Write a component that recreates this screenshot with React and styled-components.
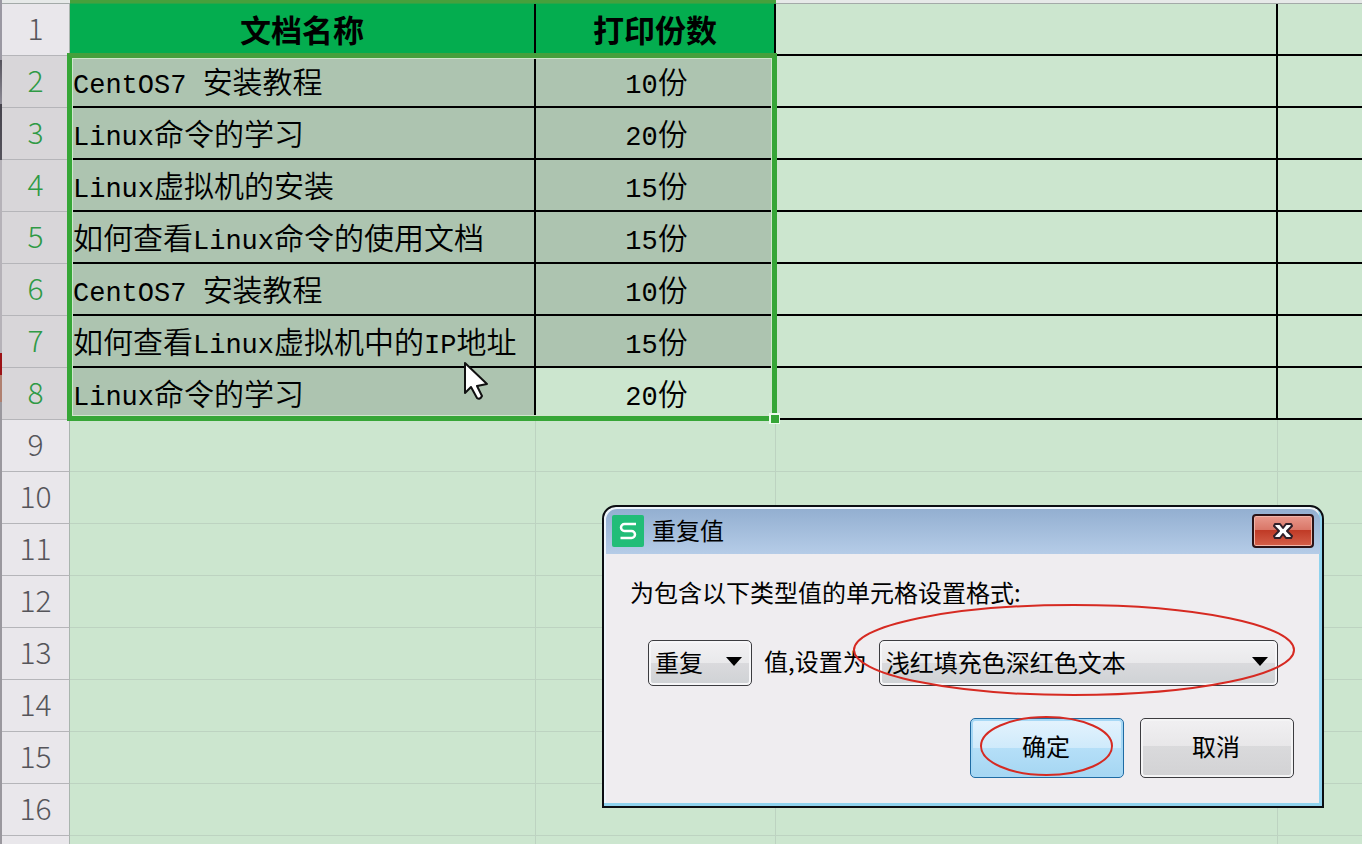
import React from 'react'
import styled, { createGlobalStyle, css } from 'styled-components'

const cjk = '"Noto Sans CJK SC", sans-serif';

const GlobalStyle = createGlobalStyle`
  * {
    box-sizing: border-box;
  }
  body {
    margin: 0;
    overflow: hidden;
    background-color: #cce6cf;
    font-family: ${cjk};
    color: #000;
  }
`;

const Main = styled.main`
  position: relative;
  display: flex;
  height: 100vh;
  overflow: hidden;
`;

// what shows of the window behind the sheet
const Edge = styled.div`
  flex: 0 0 2px;
  background: linear-gradient(
    #9a98a2 60px, #55535c 60px, #8d8b96 104px, #45434c 104px, #55535c 160px,
    #b5b2b8 160px, #b5b2b8 353px, #9c1216 353px, #9c1216 375px,
    #b08070 375px, #b08070 402px, #9a989e 402px
  );
`;

const Sheet = styled.table`
  flex: 1;
  width: 100%;
  height: max-content;
  table-layout: fixed;
  border-collapse: separate;
  border-spacing: 0;
`;

const Col = styled.col`
  width: ${({ w }) => (w ? `${w}px` : 'auto')};
`;

const Sliver = styled.td`
  height: 4px;
  padding: 0;
  background-color: ${({ $active }) => ($active ? '#46a03c' : '#e6e9e8')};
  border-bottom: 1px solid ${({ $active }) => ($active ? '#2aa547' : '#a3aaa8')};
`;

const RowHead = styled.th`
  height: 52px;
  padding: 0 0 6px;
  font-size: 30px;
  font-weight: 300;
  line-height: 40px;
  color: ${({ $active }) => ($active ? '#2f9a45' : '#55555a')};
  background-color: ${({ $active }) => ($active ? '#d8d6d9' : '#e9e7eb')};
  border-right: 1px solid #a9b5ae;
  border-bottom: 1px solid #b5b5b9;
`;

const ruled = css`
  border-right: 2px solid #000;
  border-bottom: 2px solid #000;
`;

const Cell = styled.td`
  height: 52px;
  padding: 4px 0 0 3px;
  font-size: 30px;
  font-weight: 350;
  line-height: 40px;
  white-space: nowrap;
  text-align: ${({ $center }) => ($center ? 'center' : 'left')};
  background-color: ${({ $shaded }) => ($shaded ? '#adc4b0' : 'transparent')};
  border-right: 1px solid #bdd3c1;
  border-bottom: 1px solid #bdd3c1;
  ${({ $ruled }) => $ruled && ruled}
  &:last-child {
    border-right: 0;
  }
`;

const HeadCell = styled.th`
  height: 52px;
  padding: 0;
  font-size: 31px;
  font-weight: 700;
  line-height: 40px;
  background-color: #04ad4f;
  ${ruled}
`;

const Latin = styled.span`
  font-family: "Liberation Mono", monospace;
  font-size: 27px;
`;

const Selection = styled.div`
  position: absolute;
  top: 53px;
  left: 67px;
  width: 710px;
  height: 368px;
  border: 5px solid #36a637;
  border-top-color: #46a03c;
  box-shadow: inset 0 0 0 1px #d0e6cd;
  pointer-events: none;
`;

const FillHandle = styled.i`
  position: absolute;
  right: -8px;
  bottom: -8px;
  width: 11px;
  height: 11px;
  background-color: #36a637;
  border: solid #eefbee;
  border-width: 2px 1px 1px 2px;
`;

const Pointer = styled.svg`
  position: absolute;
  top: 361px;
  left: 463px;
`;

const Dialog = styled.section`
  position: absolute;
  top: 505px;
  left: 602px;
  width: 722px;
  border: 2px solid #0b0e12;
  border-radius: 14px 14px 0 0;
  background-color: #efedf0;
  box-shadow: inset -3px -3px 0 #8fd3ee, inset 2px 2px 0 #eef5fb;
  font-size: 24px;
  line-height: 32px;
`;

const TitleBar = styled.header`
  display: flex;
  align-items: center;
  gap: 8px;
  margin: 2px 2px 0;
  padding: 0 6px 2px;
  height: 45px;
  border-radius: 11px 11px 0 0;
  background: linear-gradient(#93afd1, #b5cce7);
`;

const Title = styled.h1`
  flex: 1;
  margin: 0;
  padding-bottom: 2px;
  font-size: 24px;
  font-weight: 400;
`;

const CloseButton = styled.button`
  display: flex;
  align-items: center;
  justify-content: center;
  width: 62px;
  height: 34px;
  padding: 0;
  border: 2px solid #2a1216;
  border-radius: 4px;
  background: linear-gradient(#e8998c, #d97566 48%, #c03a26 48%, #d4604a);
  box-shadow: inset 0 0 0 1px #f0b5aa;
`;

const Form = styled.form`
  padding: 22px 28px 28px 26px;
`;

const Prompt = styled.label`
  display: block;
`;

const Fields = styled.div`
  display: flex;
  align-items: center;
  gap: 12px;
  margin: 32px 16px 32px 18px;
`;

const FieldLabel = styled.label`
  padding-bottom: 4px;
`;

const SelectBox = styled.div`
  position: relative;
  flex: ${({ $grow }) => ($grow ? '1' : '0 0 104px')};
`;

const Select = styled.select`
  display: block;
  width: 100%;
  height: 46px;
  padding: 0 6px 3px;
  appearance: none;
  border: 1px solid #3c3c40;
  border-radius: 5px;
  background: linear-gradient(#f2f1f3, #e9e9eb 50%, #dadadd 50%, #cfd2d5);
  box-shadow: inset 0 0 0 2px #f6f6f8;
  font: inherit;
  color: #000;
`;

const Arrow = styled.svg`
  position: absolute;
  top: 17px;
  right: 10px;
  pointer-events: none;
`;

const Actions = styled.div`
  display: flex;
  justify-content: flex-end;
  gap: 16px;
`;

const Button = styled.button`
  position: relative;
  width: 154px;
  height: 60px;
  padding: 0 2px 4px 0;
  border: 1px solid ${({ $primary }) => ($primary ? '#1f6ba3' : '#3c3c40')};
  border-radius: 5px;
  background: ${({ $primary }) => ($primary
    ? 'linear-gradient(#e4f3fd, #cfeafb 50%, #b5dff8 50%, #a5d6f2)'
    : 'linear-gradient(#f1f0f2, #e8e7e9 46%, #dadadc 46%, #d2d2d4)')};
  box-shadow: inset 0 0 0 2px ${({ $primary }) => ($primary ? '#a6d8f5' : '#f4f4f5')};
  font: inherit;
  color: #000;
`;

const Ring = styled.svg`
  position: absolute;
  top: ${({ $top }) => $top}px;
  left: ${({ $left }) => $left}px;
  overflow: visible;
  pointer-events: none;
`;

const rows = [
  ['CentOS7 安装教程', '10份'],
  ['Linux命令的学习', '20份'],
  ['Linux虚拟机的安装', '15份'],
  ['如何查看Linux命令的使用文档', '15份'],
  ['CentOS7 安装教程', '10份'],
  ['如何查看Linux虚拟机中的IP地址', '15份'],
  ['Linux命令的学习', '20份'],
];

const emptyRows = [9, 10, 11, 12, 13, 14, 15, 16];

// latin runs are set in their own, narrower face
const Mixed = ({ children }) => (
  children.split(/([\x20-\x7e]+)/).filter(Boolean).map((run, idx) => (
    /^[\x20-\x7e]/.test(run)
      ? <Latin key={idx}>{run}</Latin>
      : <React.Fragment key={idx}>{run}</React.Fragment>
  ))
)

const Ellipse = ({ width, height, top, left }) => (
  <Ring $top={top} $left={left} width={width} height={height} aria-hidden="true">
    <ellipse cx={width / 2} cy={height / 2} rx={width / 2 - 1} ry={height / 2 - 1}
      fill="none" stroke="#d62a22" strokeWidth="2" />
  </Ring>
)

const DropArrow = () => (
  <Arrow width="16" height="10" aria-hidden="true">
    <path d="M0 0h16L8 9z" />
  </Arrow>
)

const EmptyRow = ({ label }) => (
  <tr>
    <RowHead scope="row">{label}</RowHead>
    <Cell />
    <Cell />
    <Cell />
    <Cell />
  </tr>
)

const Spreadsheet = () => (
  <Sheet>
    <colgroup>
      <Col w={68} />
      <Col w={466} />
      <Col w={240} />
      <Col w={502} />
      <Col />
    </colgroup>
    <tbody>
      <tr>
        <Sliver />
        <Sliver $active />
        <Sliver $active />
        <Sliver />
        <Sliver />
      </tr>
      <tr>
        <RowHead scope="row">1</RowHead>
        <HeadCell scope="col">文档名称</HeadCell>
        <HeadCell scope="col">打印份数</HeadCell>
        <Cell $ruled />
        <Cell $ruled />
      </tr>
      {rows.map(([name, copies], idx) => (
        <tr key={`row${idx}`}>
          <RowHead scope="row" $active>{idx + 2}</RowHead>
          <Cell $ruled $shaded><Mixed>{name}</Mixed></Cell>
          <Cell $ruled $center $shaded={idx < rows.length - 1}><Mixed>{copies}</Mixed></Cell>
          <Cell $ruled />
          <Cell $ruled />
        </tr>
      ))}
      {emptyRows.map(n => <EmptyRow key={`row${n}`} label={n} />)}
      <EmptyRow />
    </tbody>
  </Sheet>
)

const DuplicateDialog = () => (
  <Dialog role="dialog" aria-labelledby="dialog-title">
    <TitleBar>
      <svg width="32" height="32" viewBox="0 0 32 32" aria-hidden="true">
        <rect width="32" height="32" rx="2" fill="#22bd78" />
        <path d="M24 9H12.500a3.500 3.500 0 0 0 0 7h7a3.500 3.500 0 0 1 0 7H8.500"
          fill="none" stroke="#fff" strokeWidth="2.500" />
      </svg>
      <Title id="dialog-title">重复值</Title>
      <CloseButton type="button" aria-label="关闭">
        <svg width="24" height="20" viewBox="0 0 24 20" aria-hidden="true">
          <path d="M4 3h5l3 4 3-4h5l1 2-5 5 5 5-1 2h-5l-3-4-3 4H4l-1-2 5-5-5-5z"
            fill="#fff" stroke="#30202a" strokeWidth="2" strokeLinejoin="round" />
        </svg>
      </CloseButton>
    </TitleBar>
    <Form onSubmit={e => e.preventDefault()}>
      <Prompt htmlFor="kind">为包含以下类型值的单元格设置格式:</Prompt>
      <Fields>
        <SelectBox>
          <Select id="kind">
            <option>重复</option>
            <option>唯一</option>
          </Select>
          <DropArrow />
        </SelectBox>
        <FieldLabel htmlFor="format">值,设置为</FieldLabel>
        <SelectBox $grow>
          <Select id="format">
            <option>浅红填充色深红色文本</option>
          </Select>
          <DropArrow />
          <Ellipse width={442} height={92} top={-36} left={-26} />
        </SelectBox>
      </Fields>
      <Actions>
        <Button type="submit" $primary>
          确定
          <Ellipse width={133} height={60} top={-3} left={9} />
        </Button>
        <Button type="button">取消</Button>
      </Actions>
    </Form>
  </Dialog>
)

const App = () => (
  <Main>
    <GlobalStyle />
    <Edge />
    <Spreadsheet />
    <Selection><FillHandle /></Selection>
    <Pointer width="28" height="42" viewBox="0 0 28 42" aria-hidden="true">
      <path d="M2 2v30l6-6 6 11q3 2 5-2l-5-10 10-2z" fill="#fff" stroke="#111" strokeWidth="2" strokeLinejoin="round" />
    </Pointer>
    <DuplicateDialog />
  </Main>
)

export default App;
